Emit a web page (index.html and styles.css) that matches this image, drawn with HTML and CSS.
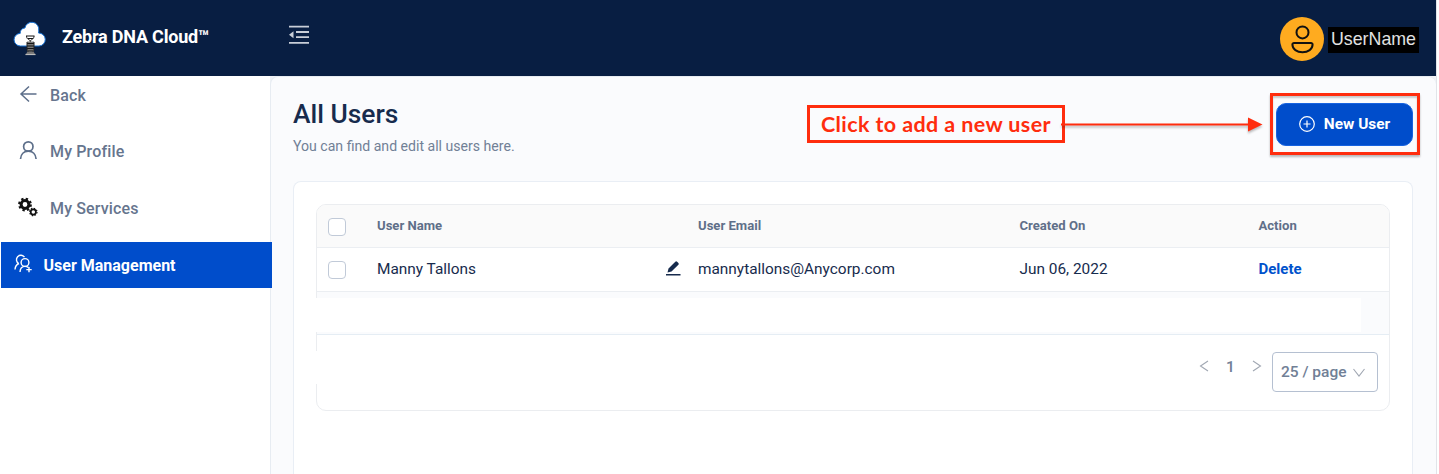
FILE: index.html
```html
<!DOCTYPE html>
<html lang="en">
<head>
<meta charset="utf-8">
<title>Zebra DNA Cloud - All Users</title>
<link rel="stylesheet" href="styles.css">
</head>
<body>
<div class="app">
  <header class="topbar">
    <svg class="logo" width="34" height="36" viewBox="0 0 34 36">
      <path d="M7.500 26a6.300 6.300 0 0 1-.3-12.600A4.800 4.800 0 0 1 11.900 8a7 7 0 0 1 13.800 2.500c0 1 0 1.500-.2 2.500a6.500 6.500 0 0 1 .5 13Z" fill="#fff" stroke="#1672d4" stroke-width="1"/>
      <path d="M14 21.500h7v10h-7z" fill="#777"/>
      <path d="M13 16h8.500M15 18.500h5M14 23.500h7M14 26h7M14 28.500h7M15 31h5" stroke="#151515" stroke-width="1.200"/>
      <path d="M14.500 31.500h6l2 3.500h-10Z" fill="#777"/>
      <path d="M12.500 34.500h10" stroke="#bbb" stroke-width="1.200"/>
      <path d="M13.500 16c0 4 4 3.500 4 5.500M21 16c0 4-4 3.500-4 5.500M14 22v7c0 2 1 2 1 3M21 22v7c0 2-1 2-1 3" stroke="#222" fill="none"/>
    </svg>
    <span class="brand">Zebra DNA Cloud™</span>
    <svg class="fold" width="22" height="20" viewBox="0 0 22 20" stroke="#c8ced8" stroke-width="1.800" fill="none">
      <path d="M1 1.600h20M8 7h13M8 12.200h13M1 17.800h20"/>
      <path d="M1 9.700 5.500 6.200v7Z" fill="#c8ced8" stroke="none"/>
    </svg>
    <div class="account">
      <svg width="44" height="44" viewBox="0 0 44 44">
        <circle cx="22" cy="22" r="22" fill="#ffab1f"/>
        <g fill="none" stroke="#111" stroke-width="2"><circle cx="22.500" cy="15.400" r="6"/><path d="M14 26h17a1.600 1.600 0 0 1 1.600 1.600c0 4.500-4.500 7.600-10.100 7.600s-10.100-3.100-10.100-7.600A1.600 1.600 0 0 1 14 26Z"/></g>
      </svg>
      <span class="username">UserName</span>
    </div>
  </header>
  <div class="body">
    <nav class="sidebar">
      <a class="item"><svg width="20" height="20" viewBox="0 0 20 20" fill="none" stroke="#5d6f8a" stroke-width="1.500"><path d="M18.500 10H3M11 2.500 3 10l8 7.500"/></svg>Back</a>
      <a class="item"><svg width="20" height="20" viewBox="0 0 20 20" fill="none" stroke="#5d6f8a" stroke-width="1.700"><circle cx="10.300" cy="6.500" r="4.700"/><path d="M2.500 19c.3-4.700 3.400-7.800 7.800-7.800s7.500 3.100 7.800 7.800"/></svg>My Profile</a>
      <a class="item"><svg width="20" height="20" viewBox="0 0 20 20" fill="none" stroke="#111"><circle cx="7" cy="7.500" r="3.900" stroke-width="3"/><circle cx="7" cy="7.500" r="5.800" stroke-width="2.200" stroke-dasharray="2.300 2.260"/><circle cx="15.300" cy="15" r="2.600" stroke-width="1.700"/><circle cx="15.300" cy="15" r="3.700" stroke-width="1.200" stroke-dasharray="1.450 1.460"/></svg>My Services</a>
      <a class="item active"><svg width="20" height="20" viewBox="0 0 20 20" fill="none" stroke="#fff" stroke-width="1.400"><path d="M5.700 9.500A4.400 4.400 0 1 1 11.500 3.200M2 15.500c.2-3 1.600-5 4-6"/><circle cx="12" cy="8.500" r="3.900"/><path d="M7 18c.2-3.500 1.800-5.600 5-5.600 1.400 0 2.400.4 3.300 1M16 13v5.200M13.300 15.600h5.400"/></svg>User Management</a>
    </nav>
    <main class="main">
      <div class="heading">
        <div class="titles">
          <h1>All Users</h1>
          <p>You can find and edit all users here.</p>
        </div>
        <div class="callout">
          <span class="note">Click to add a new user</span>
          <svg class="arrow" width="205" height="20" viewBox="0 0 205 20"><path d="M0 9.500h192" stroke="#ff2d0e" stroke-width="2"/><path d="M187 2.500 201.500 9.500 187 16.500Z" fill="#ff2d0e"/></svg>
          <div class="focus"><button class="new-user"><svg width="16" height="16" viewBox="0 0 16 16" fill="none" stroke="#fff" stroke-width="1.200"><circle cx="8" cy="8" r="7.300"/><path d="M8 4.500v7M4.500 8h7"/></svg>New User</button></div>
        </div>
      </div>
      <section class="card">
        <div class="table">
          <div class="row head"><span class="check"></span><span>User Name</span><span>User Email</span><span>Created On</span><span>Action</span></div>
          <div class="row data"><span class="check"></span><span class="name">Manny Tallons
            <svg width="16" height="16" viewBox="0 0 16 16" fill="#172b4d"><path d="M1 14h14.500v1.500H1zM2.500 12.500l1-4L10.300 1.700a1.300 1.300 0 0 1 1.800 0l1.300 1.200a1.300 1.300 0 0 1 0 1.800L6.500 11.500Z"/></svg></span>
            <span>mannytallons@Anycorp.com</span><span>Jun 06, 2022</span><a class="delete">Delete</a></div>
          <div class="blank"><div class="cover"></div></div>
          <div class="pager">
            <div class="edge-gap"></div>
            <svg width="10" height="12" viewBox="0 0 10 12"><path d="M9 1 1.500 6 9 11" /></svg>
            <span class="page">1</span>
            <svg width="10" height="12" viewBox="0 0 10 12"><path d="M1 1 8.500 6 1 11" /></svg>
            <div class="select">25 / page<svg width="12" height="9" viewBox="0 0 12 9"><path d="M.5 1 6 8l5.500-7"/></svg></div>
          </div>
        </div>
      </section>
    </main>
  </div>
</div>
</body>
</html>
```
FILE: styles.css
```css
* { box-sizing: border-box; }
body { margin: 0; background: #fff; font-family: Roboto, sans-serif; color: #172b4d; }
.app { width: 1437px; height: 474px; overflow: hidden; display: flex; flex-direction: column; border-right: 1px solid #e1e4e9; }
.topbar { height: 76px; flex: none; background: #081e42; display: flex; align-items: center; }
.logo { margin-left: 13px; margin-top: 0; }
.brand { color: #fff; font-size: 18px; font-weight: 700; margin-left: 15px; width: 227px; white-space: nowrap; margin-top: -3px; letter-spacing: -.2px; }
.fold { margin-top: -6px; margin-left: -1px; }
.account { margin-left: auto; margin-right: 17px; display: flex; align-items: center; gap: 4px; margin-top: 2px; }
.username { width: 91px; height: 26px; margin-top: 2px; background: #000; color: #e2e2e2; font: 17.8px/25px "Liberation Sans", sans-serif; text-align: center; white-space: nowrap; }
.body { flex: 1; display: flex; background: #f0f2f6; min-height: 0; }
.sidebar { width: 270px; flex: none; background: #fff; }
.item { height: 57px; padding-left: 18px; display: flex; align-items: center; gap: 12px; color: #66758e; font-size: 16px; font-weight: 500; letter-spacing: .15px; }
.item svg { margin-top: -3px; }
.item:first-child { height: 47px; padding-bottom: 8px; }
.item:nth-child(4) { position: relative; width: 271px; height: 46px; margin-top: 5px; margin-left: 1px; padding-left: 12px; gap: 10.500px; background: #004dcb; color: #fff; font-weight: 700; font-size: 16px; letter-spacing: 0; }
.main { flex: 1; min-width: 0; background: #fafbfd; border: 1px solid #e7ecf2; border-width: 1px 0 0 1px; border-radius: 8px 8px 0 0; padding: 0 23px 0 22px; display: flex; flex-direction: column; }
.heading { height: 104px; flex: none; display: flex; justify-content: space-between; }
h1 { margin: 20px 0 0; font-size: 26.4px; line-height: 34px; font-weight: 500; }
.titles p { margin: 6px 0 0; font-size: 14.100px; line-height: 18px; color: #718096; }
.callout { display: flex; align-items: center; height: 64px; margin: 15px -7px 0 0; }
.note { width: 258px; height: 38px; border: 3px solid #ff2d0e; color: #ff2d0e; font: 700 21.5px/32px Lato, sans-serif; letter-spacing: .4px; text-align: center; white-space: nowrap; }
.arrow { margin-left: -4px; margin-top: 1px; filter: drop-shadow(0 2px 1px #0004); }
.focus { width: 150px; height: 62px; margin-left: 4px; padding: 7px 4px 6px 3px; border: 3px solid #ff2d0e; box-shadow: 0 2px 2px #0004, inset 0 2px 2px #0003; }
.new-user { width: 137px; height: 43px; border: 1px solid #1763e0; border-radius: 10px; background: #004dcb; color: #fff; display: flex; align-items: center; justify-content: center; gap: 9px; font: 700 15.400px Roboto, sans-serif; padding: 0 0 2px; }
.card { flex: 1; background: #fff; border: 1px solid #e9eef5; border-bottom: 0; border-radius: 8px 8px 0 0; padding: 22px 22px 0; }
.table { height: 207px; border: 1px solid #ebedf0; border-radius: 10px; }
.row { display: grid; grid-template-columns: 60px 321px 321.5px 239px 1fr; align-items: center; border-bottom: 1px solid #ebeef2; padding-bottom: 2px; }
.head { height: 43px; background: #fafafa; border-radius: 9px 9px 0 0; color: #5f6f89; font-size: 13.1px; font-weight: 700; }
.data { height: 44px; font-size: 15.4px; }
.check { width: 18px; height: 18px; margin: 4px 0 0 11px; border: 1px solid #c1cad8; border-radius: 4px; background: #fff; }
.data .check { margin-top: 2px; }
.name { display: flex; align-items: center; justify-content: space-between; padding-right: 17px; }
.name svg { margin-top: -1px; }
.delete { color: #0052cc; font-weight: 700; font-size: 15px; }
.blank { height: 43px; padding: 6px 28px 2px 0; background: #fafbfd; border-bottom: 1px solid #e5edf4; }
.cover { height: 34px; background: #fff; margin-left: -1px; }
.pager { height: 76px; display: flex; align-items: flex-start; padding: 17px 11px 0 0; }
.pager svg { fill: none; stroke: #a0a7b2; stroke-width: 1.100; margin-top: 8px; }
.edge-gap { width: 2px; height: 33px; background: #fff; margin: -1px auto 0 -1px; }
.page { width: 43px; text-align: center; font-size: 15.5px; font-weight: 500; color: #718096; line-height: 30px; }
.select { width: 106px; height: 40px; margin-left: 10px; border: 1px solid #b5c0d1; border-radius: 4px; display: flex; align-items: center; padding-left: 8px; gap: 6px; font-size: 15.5px; font-weight: 500; color: #718096; white-space: nowrap; }
.pager .select svg { margin-top: 0; }
```
